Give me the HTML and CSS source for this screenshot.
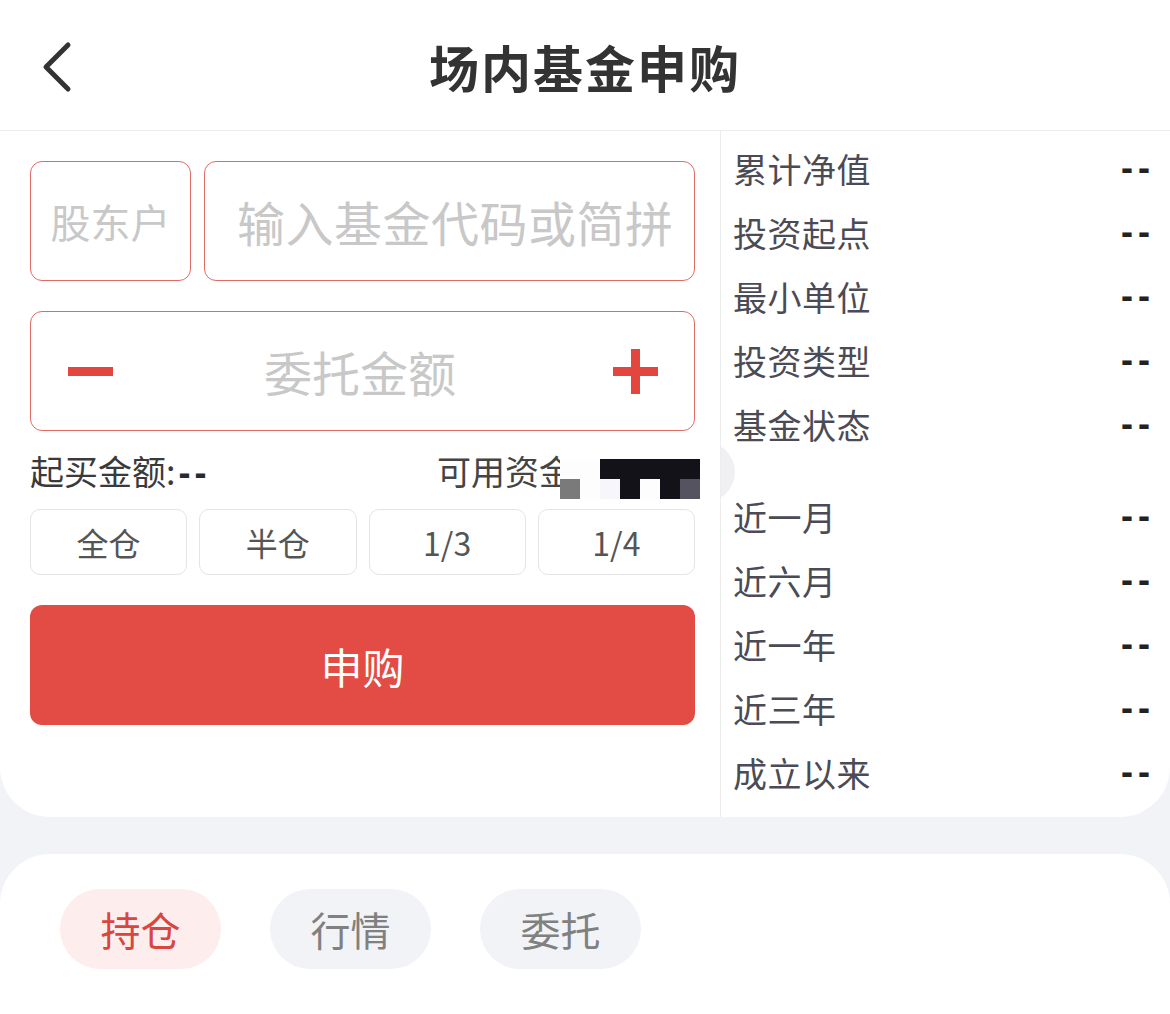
FILE: index.html
```html
<!DOCTYPE html>
<html lang="zh-CN">
<head>
<meta charset="utf-8">
<title>场内基金申购</title>
<link rel="stylesheet" href="styles.css">
</head>
<body>
<header class="topbar">
  <svg class="back" width="40" height="60" viewBox="0 0 40 60"><polyline points="30,8 8,30 30,52" fill="none" stroke="#333" stroke-width="5" stroke-linecap="round" stroke-linejoin="round"/></svg>
  <h1 class="title">场内基金申购</h1>
</header>
<main class="card trade">
  <section class="left">
    <div class="row-inputs">
      <div class="box holder">股东户</div>
      <div class="box code">输入基金代码或简拼</div>
    </div>
    <div class="box amount">
      <span class="minus"></span>
      <span class="amount-ph">委托金额</span>
      <span class="plus"></span>
    </div>
    <div class="info-line">
      <span class="minbuy">起买金额:<span class="dash">--</span></span>
      <span class="avail">可用资金</span>
    </div>
    <div class="quick">
      <button class="qbtn">全仓</button>
      <button class="qbtn">半仓</button>
      <button class="qbtn">1/3</button>
      <button class="qbtn">1/4</button>
    </div>
    <button class="submit">申购</button>
    <div class="mosaic">
      <i class="m-w"></i><i class="m-w"></i><i class="m-d"></i><i class="m-d"></i><i class="m-d"></i><i class="m-d"></i><i class="m-d"></i>
      <i class="m-g"></i><i class="m-w"></i><i class="m-l"></i><i class="m-d"></i><i class="m-w"></i><i class="m-d"></i><i class="m-g2"></i>
    </div>
  </section>
  <section class="right">
    <div class="handle"></div>
    <div class="kv"><span>累计净值</span><span class="v">--</span></div>
    <div class="kv"><span>投资起点</span><span class="v">--</span></div>
    <div class="kv"><span>最小单位</span><span class="v">--</span></div>
    <div class="kv"><span>投资类型</span><span class="v">--</span></div>
    <div class="kv"><span>基金状态</span><span class="v">--</span></div>
    <div class="kv gap"><span>近一月</span><span class="v">--</span></div>
    <div class="kv"><span>近六月</span><span class="v">--</span></div>
    <div class="kv"><span>近一年</span><span class="v">--</span></div>
    <div class="kv"><span>近三年</span><span class="v">--</span></div>
    <div class="kv"><span>成立以来</span><span class="v">--</span></div>
  </section>
</main>
<section class="card tabs-card">
  <div class="tabs">
    <span class="tab active">持仓</span>
    <span class="tab">行情</span>
    <span class="tab">委托</span>
  </div>
</section>
</body>
</html>
```

FILE: styles.css
```css
* { box-sizing: border-box; }
html, body { margin: 0; padding: 0; }
body {
  width: 1170px;
  height: 1014px;
  overflow: hidden;
  background: #f2f3f7;
  font-family: "Noto Sans CJK SC", "Noto Sans", sans-serif;
  color: #333;
}
.topbar {
  position: relative;
  height: 131px;
  background: #fff;
  border-bottom: 1px solid #ececec;
  display: flex;
  align-items: center;
  justify-content: center;
}
.back {
  position: absolute;
  left: 38px;
  top: 37px;
}
.title {
  margin: 0;
  font-size: 50px;
  font-weight: 700;
  color: #333;
  letter-spacing: 2px;
  line-height: 1;
  padding-top: 2px;
}
.card { background: #fff; }
.trade {
  display: flex;
  height: 686px;
  border-radius: 0 0 50px 50px;
}
.left {
  position: relative;
  width: 721px;
  padding: 30px 25px 0 30px;
  border-right: 1px solid #ececec;
}
.row-inputs {
  display: flex;
  gap: 13px;
}
.box {
  border: 1.5px solid #e06a64;
  border-radius: 12px;
  height: 120px;
  display: flex;
  align-items: center;
  color: #c8c8c8;
}
.holder {
  width: 161px;
  justify-content: center;
  font-size: 40px;
}
.code {
  flex: 1;
  padding-left: 32px;
  font-size: 48px;
  letter-spacing: 0.5px;
}
.amount {
  margin-top: 30px;
  justify-content: space-between;
  padding: 0 36px 0 37px;
}
.amount-ph { font-size: 48px; padding-right: 6px; }
.minus {
  width: 45px;
  height: 9px;
  background: #e2463f;
}
.plus {
  position: relative;
  width: 45px;
  height: 45px;
}
.plus::before, .plus::after {
  content: "";
  position: absolute;
  background: #e2463f;
}
.plus::before { left: 0; right: 0; top: 18px; height: 9px; }
.plus::after { top: 0; bottom: 0; left: 18px; width: 9px; }
.info-line {
  display: flex;
  height: 78px;
  align-items: center;
  font-size: 34px;
  color: #3a3a3a;
}
.minbuy { width: 407px; }
.dash {
  font-family: "Liberation Sans", sans-serif;
  font-weight: 700;
  font-size: 36px;
  letter-spacing: 4px;
  color: #2a2a2a;
  margin-left: 3px;
}
.avail { color: #444; }
.quick {
  display: flex;
  gap: 12px;
}
.qbtn {
  flex: 1;
  height: 66px;
  border: 1px solid #e4e4e4;
  border-radius: 10px;
  background: #fff;
  font-family: inherit;
  font-size: 32px;
  color: #555;
  padding: 0;
}
.submit {
  display: block;
  width: 100%;
  margin-top: 30px;
  height: 120px;
  border: 0;
  border-radius: 12px;
  background: #e24c45;
  color: #fff;
  font-family: inherit;
  font-size: 42px;
  padding: 0;
}
.mosaic {
  position: absolute;
  left: 560px;
  top: 328px;
  width: 140px;
  height: 40px;
  display: grid;
  grid-template-columns: repeat(7, 20px);
  grid-template-rows: repeat(2, 20px);
  z-index: 3;
}
.mosaic i { display: block; }
.m-w { background: #fdfdfe; }
.m-l { background: #f7f7fb; }
.m-d { background: #121218; }
.m-g { background: #7a7a7a; }
.m-g2 { background: #55535f; }
.right {
  flex: 1;
  padding: 5px 20px 0 12px;
  position: relative;
  overflow: hidden;
}
.handle {
  position: absolute;
  left: -46px;
  top: 311px;
  width: 60px;
  height: 60px;
  border-radius: 50%;
  background: #f0f0f2;
}
.kv {
  position: relative;
  display: flex;
  justify-content: space-between;
  align-items: center;
  height: 64px;
  font-size: 34px;
  color: #4b4b55;
  letter-spacing: 0.5px;
}
.kv .v {
  font-family: "Liberation Sans", sans-serif;
  font-weight: 700;
  color: #222;
  font-size: 36px;
  letter-spacing: 5px;
  margin-right: -5px;
}
.kv.gap { margin-top: 28px; }
.tabs-card {
  margin-top: 37px;
  height: 200px;
  border-radius: 50px 50px 0 0;
  padding: 35px 60px 0;
}
.tabs {
  display: flex;
  gap: 49px;
}
.tab {
  width: 161px;
  height: 80px;
  border-radius: 40px;
  background: #f2f3f7;
  color: #808080;
  font-size: 40px;
  display: flex;
  align-items: center;
  justify-content: center;
}
.tab.active {
  background: #fdeeed;
  color: #d9463f;
}
```
